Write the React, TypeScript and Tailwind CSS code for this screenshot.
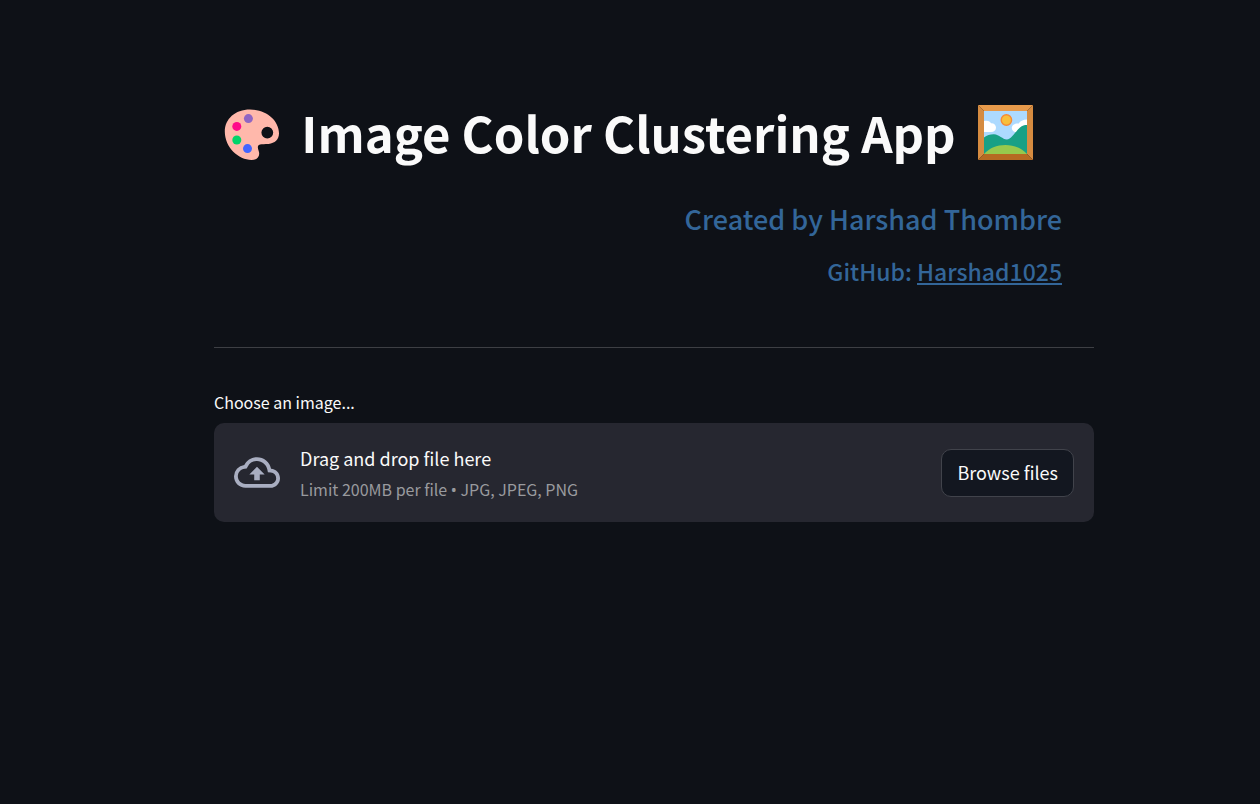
import { useRef } from "react";

function PaletteIcon() {
  return (
    <svg viewBox="-1 -4 56 55" className="h-[55px] w-14 shrink-0" aria-hidden="true">
      <path
        fill="#ffb8ab"
        fillRule="evenodd"
        d="M26 .6C11 .6.8 10.2.8 22.6.8 38.5 14.5 51 27.5 51c6.300 0 8.900-4.200 7.200-9.100-1-2.700-1.700-5.500 1.300-6.400 2.200-.7 4.700-.3 8.600-.6C50.800 34.400 55 30.400 55 24.300 55 11.600 42.200.6 26 .6Zm17.300 17.100a5.900 5.900 0 1 1 0 11.800 5.900 5.900 0 0 1 0-11.800Z"
      />
      <circle cx="24.400" cy="9.600" r="4.500" fill="#9065c3" />
      <circle cx="12.800" cy="17.400" r="4.500" fill="#ff0a8a" />
      <circle cx="12.800" cy="31" r="4.500" fill="#00d469" />
      <circle cx="23.500" cy="39.600" r="4.500" fill="#4365ff" />
    </svg>
  );
}

function FramedPictureIcon() {
  return (
    <svg viewBox="0 0 55 55" className="size-[55px] shrink-0" aria-hidden="true">
      <path fill="#e79a4b" d="M0 0h55l-6 6H6Z" />
      <path fill="#d58b40" d="M0 0l6 6v43l-6 6Z" />
      <path fill="#d58b40" d="M55 0l-6 6v43l6 6Z" />
      <path fill="#b66a22" d="M0 55l6-6h43l6 6Z" />
      <path fill="#addaff" d="M6 6h43v43H6Z" />
      <path
        fill="#fff"
        d="M6 16c4-1 6 .4 7 2.200 3-.2 5 1.800 5 4.300 0 2.800-2 4.500-5 4.500H6ZM49 14.500c-4 .2-7 1.500-8.200 4-4-.3-7 1.400-7 4.600 0 2.400 1.700 3.900 4 3.900H49Z"
      />
      <path
        fill="#18a085"
        d="M6 32.500c3-2.300 6.500-3.300 10-3.200 5.200.2 8.700 5.200 12.800 5.200 4.500 0 8.500-8 13.200-12 2.200-1.900 4.500-2.500 7-2.500V49H6Z"
      />
      <path fill="#97c94d" d="M6 49c5-5.800 13-9 21.500-9S44 43.200 49 49Z" />
      <circle cx="28.400" cy="15" r="5.200" fill="#f8bf3c" stroke="#f58a37" strokeWidth="1.400" />
    </svg>
  );
}

function CloudUploadIcon() {
  return (
    <svg viewBox="0 0 24 16" className="h-[31px] w-[46px] shrink-0" aria-hidden="true">
      <path
        fill="#a9aec1"
        d="M19.350 6.040A7.490 7.490 0 0 0 12 0C9.110 0 6.600 1.640 5.350 4.040A5.994 5.994 0 0 0 0 10c0 3.310 2.690 6 6 6h13c2.760 0 5-2.240 5-5 0-2.640-2.050-4.780-4.650-4.960ZM19 14H6c-2.210 0-4-1.790-4-4 0-2.050 1.530-3.760 3.560-3.970l1.070-.11.5-.95A5.469 5.469 0 0 1 12 2c2.620 0 4.880 1.860 5.390 4.430l.3 1.500 1.530.11A2.980 2.980 0 0 1 22 11c0 1.650-1.350 3-3 3ZM8 9h2.550v3h2.900V9H16l-4-4-4 4Z"
      />
    </svg>
  );
}

export default function App() {
  const fileInput = useRef<HTMLInputElement>(null);

  return (
    <div className="min-h-screen bg-[#0e1117] pl-12 font-['Noto_Sans_CJK_SC',sans-serif] text-[#fafafa]">
      <main className="mx-auto max-w-[880px] pt-[99px]">
        <header className="pr-8">
          <h1 className="flex items-center justify-center gap-[22px] pr-5 text-[49px] leading-[66px] font-bold whitespace-nowrap">
            <PaletteIcon />
            <span>Image Color Clustering App</span>
            <FramedPictureIcon />
          </h1>
          <h2 className="mt-[34px] text-right text-[27px] leading-10 font-medium text-[#336699]">
            Created by Harshad Thombre
          </h2>
          <h3 className="mt-4 text-right text-[23px] leading-8 font-medium text-[#336699]">
            GitHub:{" "}
            <a href="https://github.com/Harshad1025" className="underline">
              Harshad1025
            </a>
          </h3>
        </header>

        <hr className="mt-[60px] border-t border-[#3d3f44]" />

        <section className="mt-[42px]">
          <label htmlFor="image-file" className="block text-[16px] leading-6">
            Choose an image...
          </label>
          <div className="mt-[9px] flex items-center gap-5 rounded-[10px] bg-[#262730] px-5 py-5">
            <CloudUploadIcon />
            <div className="flex-1">
              <p className="text-[18px] leading-[30px]">Drag and drop file here</p>
              <p className="mt-1 text-[16px] leading-[25px] text-[#999a9e]">
                Limit 200MB per file{" "}
                <span className="font-['Noto_Sans',sans-serif] leading-none">•</span> JPG, JPEG, PNG
              </p>
            </div>
            <input
              ref={fileInput}
              id="image-file"
              type="file"
              accept=".jpg,.jpeg,.png"
              className="hidden"
            />
            <button
              type="button"
              onClick={() => fileInput.current?.click()}
              className="h-12 rounded-[10px] border border-[#41434b] bg-[#131720] px-[15px] text-[18px] whitespace-nowrap"
            >
              Browse files
            </button>
          </div>
        </section>
      </main>
    </div>
  );
}
